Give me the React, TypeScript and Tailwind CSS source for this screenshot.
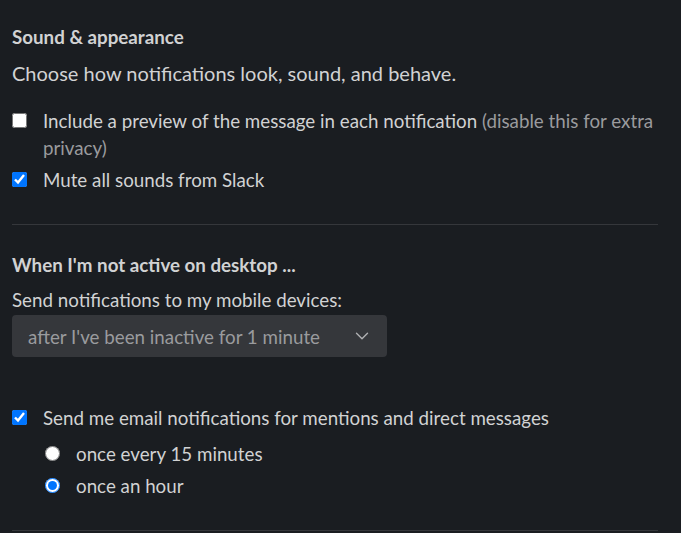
import { ChevronDown } from 'lucide-react'

export default function App() {
  return (
    <div
      className="min-h-[533px] w-[681px] bg-[#1a1d21] text-[#d1d2d3] text-[18.75px] leading-[27px]"
      style={{ fontFamily: 'Lato, "Noto Sans", sans-serif' }}
    >
      <div className="w-[658px] pl-[12px] pt-[23px]">
        <h2 className="font-bold">Sound &amp; appearance</h2>
        <p className="mt-[10px] text-[20px]">Choose how notifications look, sound, and behave.</p>

        <label className="mt-[20px] flex items-start">
          <span className="flex h-[27px] w-[31px] shrink-0 items-center">
            <input type="checkbox" className="m-0 h-[15px] w-[15px]" />
          </span>
          <span>
            Include a preview of the message in each notification{' '}
            <span className="text-[#9a9b9e]">(disable this for extra privacy)</span>
          </span>
        </label>
        <label className="mt-[5px] flex items-start">
          <span className="flex h-[27px] w-[31px] shrink-0 items-center">
            <input type="checkbox" defaultChecked className="m-0 h-[15px] w-[15px]" />
          </span>
          <span>Mute all sounds from Slack</span>
        </label>

        <div className="mt-[31px] h-px bg-[#35373b]" />

        <h2 className="mt-[26px] font-bold">When I'm not active on desktop ...</h2>
        <p className="mt-[8px]">Send notifications to my mobile devices:</p>
        <div className="mt-[2px] flex h-[42px] w-[375px] items-center justify-between rounded-[4px] bg-[#35373b] pl-[16px] pr-[14px] text-[#9a9b9e]">
          <span>after I've been inactive for 1 minute</span>
          <ChevronDown size={22} strokeWidth={1.5} className="text-[#b0b1b3]" />
        </div>

        <label className="mt-[47px] flex items-start">
          <span className="flex h-[27px] w-[31px] shrink-0 items-center">
            <input type="checkbox" defaultChecked className="m-0 h-[15px] w-[15px]" />
          </span>
          <span>Send me email notifications for mentions and direct messages</span>
        </label>
        <div className="pl-[33px]">
          <label className="mt-[9px] flex items-start">
            <span className="flex h-[27px] w-[31px] shrink-0 items-center">
              <input type="radio" name="freq" className="m-0 h-[15px] w-[15px]" />
            </span>
            <span>once every 15 minutes</span>
          </label>
          <label className="mt-[5px] flex items-start">
            <span className="flex h-[27px] w-[31px] shrink-0 items-center">
              <input type="radio" name="freq" defaultChecked className="m-0 h-[15px] w-[15px]" />
            </span>
            <span>once an hour</span>
          </label>
        </div>

        <div className="mt-[31px] h-px bg-[#35373b]" />
      </div>
    </div>
  )
}
